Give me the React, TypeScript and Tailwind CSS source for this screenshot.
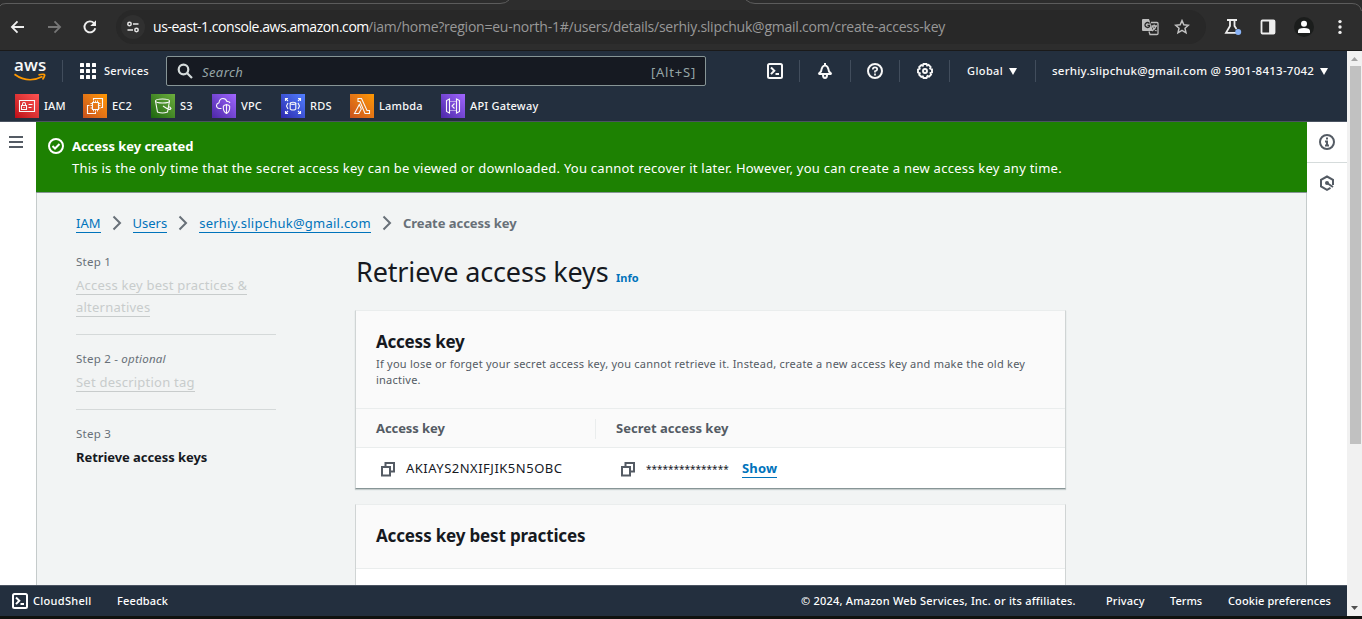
import type { ReactNode } from "react";

type IconProps = { children: ReactNode; size?: number; box?: string; w?: number; className?: string };

function Icon({ children, size = 16, box = "0 0 16 16", w = 2, className = "" }: IconProps) {
  return (
    <svg width={size} height={size} viewBox={box} fill="none" stroke="currentColor" strokeWidth={w} className={"block shrink-0 " + className}>
      {children}
    </svg>
  );
}

function BrowserBar() {
  return (
    <div className="relative flex h-[51px] shrink-0 items-center border-b border-[#1a1a1a] bg-[#2d2d2d] pt-[3px] text-white">
      <svg width="1362" height="12" viewBox="0 0 1362 12" fill="none" stroke="#5c5c5c" className="absolute left-0 top-0">
        <path d="M0 6Q1 3.5 6 3.5H500Q506 3.5 509 0M746 0Q750 3.5 755 3.5H1352Q1360 3.5 1361.5 11" />
      </svg>
      <div className="flex w-[116px] shrink-0 items-center pl-[10px]">
        <Icon w={1.8} className="text-[#eeeeee]"><path d="M14 8H2M7.5 2.4 1.9 8l5.6 5.6" /></Icon>
        <Icon w={1.8} className="ml-5 text-[#767676]"><path d="M2 8h12M8.5 2.4 14.1 8l-5.6 5.6" /></Icon>
        <Icon w={1.9} className="ml-5 text-[#eeeeee]">
          <path d="M13.3 9.3A5.5 5.5 0 1 1 12 4.1" />
          <path d="M14 1v6H8.2L14 1.2Z" fill="currentColor" stroke="none" />
        </Icon>
      </div>
      <div className="flex h-[34px] w-[1090px] shrink-0 items-center rounded-full bg-[#282828] pl-[5px]">
        <div className="flex size-6 items-center justify-center rounded-full bg-[#303030]">
          <Icon w={1.5} size={14} box="0 0 14 14" className="text-[#e6e6e6]">
            <circle cx="3.5" cy="4" r="1.7" /><path d="M7 4h5.5M1.500 10H7" /><circle cx="10.5" cy="10" r="1.7" />
          </Icon>
        </div>
        <div className="ml-2 w-[988px] whitespace-nowrap font-['Open_Sans','Noto_Sans',sans-serif] text-[14px] leading-5 text-[#989898]">
          <span className="inline-block w-[215px] tracking-[-0.44px] text-white">us-east-1.console.aws.amazon.com</span>
          <span className="tracking-[-0.23px]">/iam/home?region=eu-north-1#/users/details/serhiy.slipchuk@gmail.com/create-access-key</span>
        </div>
        <Icon size={18} box="0 0 18 18" w={1.3} className="text-[#bdbdbd]">
          <path d="M1 2Q1 1 2 1h6l4 12H2Q1 13 1 12Z" fill="currentColor" stroke="none" />
          <path d="M8.5 5.5A2.5 2.5 0 1 0 8.5 8.5V7.300H6.500" stroke="#282828" />
          <path d="M10 4.500h6q1 0 1 1v10q0 1-1 1H9l-1-3M10.500 8H16M13.200 6.500V8M15 8q-.6 3-4 5M11 8q1.500 3 4.500 5" />
        </Icon>
        <Icon className="ml-[15px] text-[#c2c2c2]" w={1.5}>
          <path d="m8 1.600 1.850 4.200 4.550.45L11 9.300l1 4.500L8 11.400l-4 2.400 1-4.500-3.400-3.050 4.550-.45Z" />
        </Icon>
      </div>
      <Icon size={18} box="0 0 18 18" w={1.8} className="ml-[18px] text-[#eeeeee]">
        <path d="M3 2h10M6 2v6L2 14.800h11M10.500 2v6l2 3" /><circle cx="14.2" cy="14" r="3" fill="#8ab4f8" stroke="none" />
      </Icon>
      <Icon className="ml-[18px] text-[#eeeeee]" w={1.8}>
        <rect x="1.5" y="1.5" width="13" height="13" rx="1" /><path d="M10 2h4v12h-4z" fill="currentColor" />
      </Icon>
      <div className="ml-[18px] flex size-5 items-center justify-center rounded-full bg-[#1b1d1c]">
        <Icon w={0} size={14} box="0 0 14 14"><circle cx="7" cy="3.8" r="3" fill="white" /><path d="M1 13v-2q0-3 6-3t6 3v2Z" fill="white" /></Icon>
      </div>
      <Icon w={0} className="ml-[18px] text-[#eeeeee]">
        <circle cx="8" cy="2.6" r="1.7" fill="currentColor" /><circle cx="8" cy="8" r="1.7" fill="currentColor" /><circle cx="8" cy="13.4" r="1.7" fill="currentColor" />
      </Icon>
    </div>
  );
}

const Shell = () => (
  <Icon><rect x="1" y="1" width="14" height="14" rx="1.5" /><path d="M4 4.500 7.300 7.800 4 11.100M8.500 11H12" /></Icon>
);

const Caret = () => (
  <svg width="8" height="7" viewBox="0 0 8 7" className="block shrink-0"><path d="M0 0h8L4 7Z" fill="white" /></svg>
);

function Divider() {
  return <div className="h-[22px] w-px shrink-0 bg-[#414d5c]" />;
}

function TopRow() {
  return (
    <div className="flex h-10 items-center text-[11px] font-medium tracking-[0.2px]">
      <div className="flex w-[62px] shrink-0 flex-col items-start pl-[14px]">
        <span className="h-[15px] font-['Open_Sans',sans-serif] text-[17px] font-semibold leading-[9px]">aws</span>
        <svg width="32" height="9" viewBox="0 0 32 9" fill="none" stroke="#ff9900" strokeWidth="1.7" className="-mt-[2px] block">
          <path d="M.5 1.200Q14 11 28.500 3.500M24.500 1.800q7-1.500 6 1Q30 5 28.500 6.500" />
        </svg>
      </div>
      <Divider />
      <svg width="16" height="16" viewBox="0 0 16 16" fill="white" className="ml-[17px] block shrink-0">
        {[0, 6, 12].map((y) => [0, 6, 12].map((x) => <rect key={x + "-" + y} x={x} y={y} width="4" height="4" rx=".5" />))}
      </svg>
      <span className="ml-2 w-[62px] shrink-0 tracking-[0.25px]">Services</span>
      <div className="flex h-[30px] w-[540px] shrink-0 items-center rounded-[2px] border border-[#879596] bg-[#161a22] pl-[10px] pr-[9px] text-[13px] font-normal text-[#95a5a6]">
        <Icon w={2.2} className="text-[#d5dbdb]"><circle cx="6.5" cy="6.5" r="4.8" /><path d="m10 10 5 5" /></Icon>
        <span className="ml-[9px] flex-1 pt-[3px] italic tracking-[0.4px]">Search</span>
        <span className="pt-[3px] tracking-[0.8px]">[Alt+S]</span>
      </div>
      <div className="flex w-[93px] shrink-0 justify-end pl-[61px] pr-4"><Shell /></div>
      <Divider />
      <div className="flex w-[50px] shrink-0 justify-center">
        <Icon><path d="M8 0v2M1.500 11h13M1.500 11 4 8.500Q5 2.500 8 2.500T12 8.500L14.500 11M6 12q0 3 2 3t2-3" /></Icon>
      </div>
      <Divider />
      <div className="flex w-12 shrink-0 justify-center"><Icon><circle cx="8" cy="8" r="7" /><path d="M5.800 6.400Q5.800 4.300 8 4.300t2.200 1.900Q10.200 7.500 8 8.200v1.300M8 10.500v2" strokeWidth="1.7" /></Icon></div>
      <Divider />
      <div className="flex w-[49px] shrink-0 justify-center">
        <Icon w={1.9}><path d="M6.500 1h3l.6 1.500 1.500-.6 2 2-.5 1.600 1.900.9v3l-1.500.6.6 1.600-2 2-1.600-.6L9.500 15h-3l-.7-1.600-1.500.6-2.100-2.200.6-1.500L1 9.500v-3l1.700-.8-.5-1.600 2.100-2 1.500.6Z" /><circle cx="8" cy="8" r="2" /></Icon>
      </div>
      <Divider />
      <span className="ml-[17px] w-[42px] shrink-0 tracking-[0.4px]">Global</span>
      <Caret />
      <div className="ml-[18px]"><Divider /></div>
      <span className="ml-4 w-[268px] shrink-0 whitespace-nowrap text-[11.5px] tracking-[0.24px]">serhiy.slipchuk@gmail.com @ 5901-8413-7042</span>
      <Caret />
    </div>
  );
}

type Service = { name: string; cell: string; tile: string; art: ReactNode };

const services: Service[] = [
  { name: "IAM", cell: "w-[68px]", tile: "bg-linear-to-tr from-[#bd0816] to-[#ff5252]", art: <><path d="M4.500 6.500h15v11h-15z" /><path d="M6.500 11.500h5v4h-5zM7.500 11.500V10q0-1.500 1.500-1.500t1.500 1.500v1.500M9 13v1M13.500 10.500h4M13.500 13.500h3" /></> },
  { name: "EC2", cell: "w-[68px]", tile: "bg-linear-to-tr from-[#c8511b] to-[#ff9900]", art: <><path d="M9.500 8.500h6v7h-6z" /><path d="M10.500 6.500v2M12.500 6.500v2M14.500 6.500v2M10.500 15.500v2M12.500 15.500v2M14.500 15.500v2M7.500 9.500h2M7.500 11.500h2M7.500 14h2M15.500 9.500h2M15.500 11.500h2M15.500 14h2" strokeWidth=".9" /><path d="M10.500 6V4.500h9v9H18M6.500 11.500h-2v8h8V18" /></> },
  { name: "S3", cell: "w-[61px]", tile: "bg-linear-to-tr from-[#1b660f] to-[#6cae3e]", art: <><ellipse cx="11.5" cy="7" rx="7" ry="2" /><path d="m4.500 7 2 11q5 2 10 0l2-11M12 12q7 5 8 2.500-.5-1.500-3-2.200" /></> },
  { name: "VPC", cell: "w-[69px]", tile: "bg-linear-to-tr from-[#4d27a8] to-[#a166ff]", art: <path d="M9.500 14.500H7Q4.500 14 4.500 11.500q0-2 2.500-2.800Q7.500 4.500 11 4.500q3 0 4 3 2.500-.3 3 1.500M14.500 10.500q-3 .8-3.200 1.800-.3 5.500 3.200 7.200 3.500-1.700 3.200-7.200-.2-1-3.200-1.800ZM14.500 11v8" /> },
  { name: "RDS", cell: "w-[69px]", tile: "bg-linear-to-tr from-[#2e27ad] to-[#527fff]", art: <><ellipse cx="12" cy="9.3" rx="2.8" ry="1.1" /><path d="M9.200 9.300v5.500q0 1.200 2.800 1.200t2.800-1.200V9.300M4.500 7V4.500H7M4.500 4.500 7 7M17 4.500h2.500V7M19.500 4.500 17 7M4.500 17v2.500H7M4.500 19.500 7 17M17 19.500h2.500V17M19.500 19.500 17 17M7 9l-1.500 3L7 15M17 9l1.500 3-1.500 3" /></> },
  { name: "Lambda", cell: "w-[91px]", tile: "bg-linear-to-tr from-[#c8511b] to-[#ff9900]", art: <path d="M8 4.500h3.500l5.500 12h2.500v3H15l-5-12H8ZM9.300 10.500l2 4.500-2.500 4.500H4.500Z" /> },
  { name: "API Gateway", cell: "w-[110px]", tile: "bg-linear-to-tr from-[#4d27a8] to-[#a166ff]", art: <><path d="m8.500 5-3 1.500v11l3 1.500ZM15.500 5l3 1.500v11l-3 1.500ZM13.500 9.500 11 12l2.500 2.500" /><path d="M9.500 7.500H15M9.500 16.500H15" strokeDasharray="1 1" /></> },
];

function ServiceBar() {
  return (
    <div className="flex h-[30px] items-center pl-[15px] text-[11px] font-medium tracking-[0.2px]">
      {services.map((s) => (
        <div key={s.name} className={"flex shrink-0 items-center gap-[5px] whitespace-nowrap " + s.cell}>
          <span className={"size-6 shrink-0 " + s.tile}><Icon size={24} box="0 0 24 24" w={1.1}>{s.art}</Icon></span>
          {s.name}
        </div>
      ))}
    </div>
  );
}

const Chevron = () => (
  <Icon className="text-[#687078]" w={2}><path d="m4.500 1.500 6.500 6.500-6.500 6.500" /></Icon>
);

const Copy = () => (
  <Icon className="-mt-px text-[#545b64]"><path d="M2 6h8v8.500H2zM5.500 5.500V2H14v8.500h-3.500" /></Icon>
);

function Steps() {
  return (
    <div className="w-[200px] shrink-0 text-[13px] leading-[22px] tracking-[0.23px] text-[#c8cccc]">
      <div className="h-[81px] border-b border-[#d5d9d9]">
        <div className="text-[11.5px] leading-4 text-[#687078]">Step 1</div>
        <div className="mt-1">
          <span className="border-b border-[#c8cccc]">Access key best practices &amp;</span><br />
          <span className="border-b border-[#c8cccc]">alternatives</span>
        </div>
      </div>
      <div className="h-[75px] border-b border-[#d5d9d9] pt-4">
        <div className="text-[11.5px] leading-4 text-[#687078]">Step 2 - <i>optional</i></div>
        <div className="mt-1"><span className="border-b border-[#c8cccc]">Set description tag</span></div>
      </div>
      <div className="pt-4">
        <div className="text-[11.5px] leading-4 text-[#687078]">Step 3</div>
        <div className="mt-1 font-bold tracking-[-0.07px] text-[#16191f]">Retrieve access keys</div>
      </div>
    </div>
  );
}

const card = "border border-t-[#eaeded] border-x-[#d0d4d4] bg-white";

function Content() {
  return (
    <div className="w-[711px] shrink-0">
      <div className="flex h-14 items-baseline whitespace-nowrap pl-px pt-px">
        <h1 className="w-[260px] text-[27px] leading-[34px] tracking-[-0.15px] text-[#16191f]">Retrieve access keys</h1>
        <span className="text-[11px] font-bold text-[#0073bb]">Info</span>
      </div>
      <section className={card + " h-[179px] border-b-[#879596] shadow-[0_1px_1px_#c5cccc]"}>
        <div className="h-[98px] border-b border-[#eaeded] bg-[#fafafa] px-5 pt-5">
          <h2 className="text-[17px] font-bold leading-[22px] tracking-[-0.25px] text-[#16191f]">Access key</h2>
          <p className="mt-[3px] whitespace-nowrap text-[11px] leading-4 tracking-[0.235px] text-[#545b64]">If you lose or forget your secret access key, you cannot retrieve it. Instead, create a new access key and make the old key<br />inactive.</p>
        </div>
        <div className="flex h-[39px] items-center border-b border-[#eaeded] bg-[#fafafa] pl-5 pt-px text-[13px] font-bold text-[#545b64]">
          <span className="w-[219px] tracking-[-0.08px]">Access key</span>
          <span className="h-5 w-px bg-[#eaeded]" />
          <span className="ml-5">Secret access key</span>
        </div>
        <div className="flex h-10 items-center pl-6 pt-[2px] text-[13px] text-[#16191f]">
          <Copy />
          <span className="ml-[10px] w-[214px] tracking-[0.5px]">AKIAYS2NXIFJIK5N5OBC</span>
          <Copy />
          <span className="ml-[10px] w-[96px] text-[10px]">***************</span>
          <span className="-mt-[2px] border-b border-[#0073bb] font-bold leading-[18px] tracking-[0.2px] text-[#0073bb]">Show</span>
        </div>
      </section>
      <section className={card + " mt-[15px] h-[120px]"}>
        <div className="h-[64px] border-b border-[#eaeded] bg-[#fafafa] px-5 pt-5">
          <h2 className="text-[17px] font-bold leading-[22px] tracking-[-0.17px] text-[#16191f]">Access key best practices</h2>
        </div>
      </section>
    </div>
  );
}

function MainArea() {
  return (
    <main className="h-[463px] w-[1271px] shrink-0 overflow-hidden bg-[#f2f4f4]">
      <div className="flex h-[71px] border-b border-[#879596] bg-[#1d8102] pl-3 pt-4 text-[13px] text-white">
        <Icon><circle cx="8" cy="8" r="7" /><path d="m4.500 8 2.500 2.500L11.500 6" /></Icon>
        <div className="-mt-[3px] ml-2 whitespace-nowrap leading-[22px]">
          <div className="font-bold tracking-[-0.05px]">Access key created</div>
          <div className="tracking-[0.25px]">This is the only time that the secret access key can be viewed or downloaded. You cannot recover it later. However, you can create a new access key any time.</div>
        </div>
      </div>
      <div className="h-[392px] border-x border-[#c5cbcb] pl-[39px] pt-[19px]">
        <nav className="flex h-[22px] items-center whitespace-nowrap text-[13px] leading-[18px] text-[#0073bb]">
          <span className="border-b border-[#0073bb]">IAM</span>
          <span className="px-2"><Chevron /></span>
          <span className="border-b border-[#0073bb]">Users</span>
          <span className="px-2"><Chevron /></span>
          <span className="border-b border-[#0073bb] tracking-[0.24px]">serhiy.slipchuk@gmail.com</span>
          <span className="px-2"><Chevron /></span>
          <span className="font-bold tracking-[-0.05px] text-[#687078]">Create access key</span>
        </nav>
        <div className="mt-5 flex gap-[79px]">
          <Steps />
          <Content />
        </div>
      </div>
    </main>
  );
}

function Scrollbar() {
  return (
    <div className="flex h-[565px] w-[15px] shrink-0 flex-col items-center bg-[#f1f1f1]">
      <svg width="7" height="4" viewBox="0 0 7 4" className="mt-[6px] block"><path d="M0 4h7L3.500 0Z" fill="#a3a3a3" /></svg>
      <div className="ml-px mt-[5px] h-[378px] w-[11px] bg-[#c1c1c1]" />
      <div className="flex-1" />
      <svg width="7" height="4" viewBox="0 0 7 4" className="mb-[6px] block"><path d="M0 0h7L3.500 4Z" fill="#505050" /></svg>
    </div>
  );
}

export default function App() {
  return (
    <div className="flex h-[619px] w-[1362px] flex-col overflow-hidden bg-[#10120f] font-['Noto_Sans','Open_Sans',sans-serif]">
      <BrowserBar />
      <div className="flex h-[565px]">
        <div className="w-[1347px] shrink-0">
          <header className="h-[71px] overflow-hidden border-b border-[#4a5361] bg-[#232f3e] text-[#f8f8f8]">
            <TopRow />
            <ServiceBar />
          </header>
          <div className="flex bg-white">
            <div className="w-9 shrink-0 pl-[9px] pt-[14px]">
              <svg width="14" height="12" viewBox="0 0 14 12" fill="#545b64" className="block"><path d="M0 0h14v2H0zM0 5h14v2H0zM0 10h14v2H0z" /></svg>
            </div>
            <MainArea />
            <div className="flex flex-1 flex-col items-center text-[#545b64]">
              <div className="flex h-[41px] w-full items-center justify-center border-b border-[#d5dbdb]">
                <Icon><circle cx="8" cy="8" r="7" /><path d="M8 3.500v2M6 7.500h2v4M6 11.500h4" /></Icon>
              </div>
              <div className="pt-3">
                <Icon><path d="M14 10V4.800L8 1.500 2 4.800v6.700L8 14.800l3.500-1.900" /><circle cx="8" cy="8" r="2" fill="currentColor" stroke="none" /><path d="m8 8 6 4" /></Icon>
              </div>
            </div>
          </div>
          <footer className="flex h-[31px] items-center whitespace-nowrap border-t border-[#4a5361] bg-[#232f3e] pl-3 text-[11px] font-medium text-white">
            <Shell />
            <span className="ml-[5px] w-[84px] tracking-[0.3px]">CloudShell</span>
            <span className="w-[684px] tracking-[0.15px]">Feedback</span>
            <span className="w-[305px] tracking-[0.22px]">© 2024, Amazon Web Services, Inc. or its affiliates.</span>
            <span className="w-[64px] tracking-[0.15px]">Privacy</span>
            <span className="w-[58px]">Terms</span>
            <span className="tracking-[0.1px]">Cookie preferences</span>
          </footer>
        </div>
        <Scrollbar />
      </div>
    </div>
  );
}
